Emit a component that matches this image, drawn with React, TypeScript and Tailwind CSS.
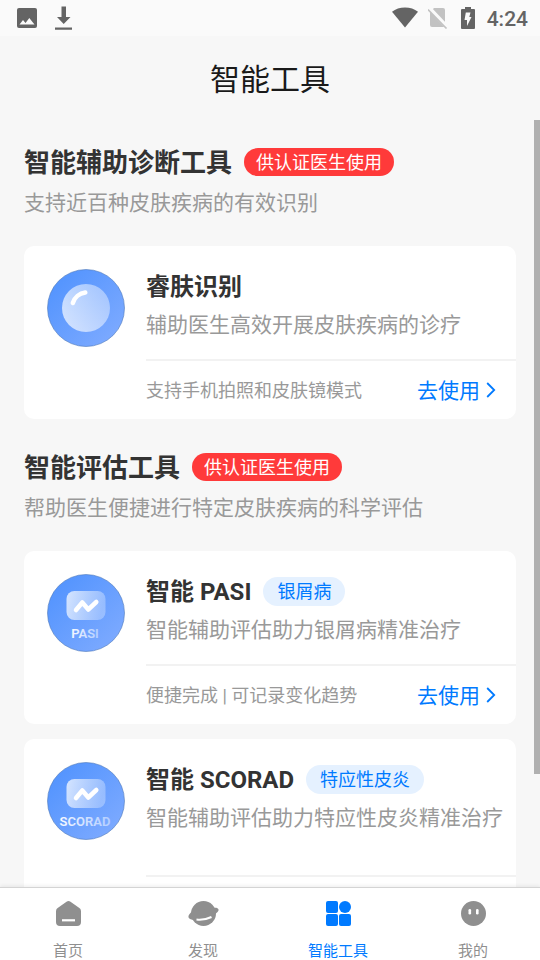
import type { ReactNode } from 'react';

function StatusBar() {
  return (
    <div className="flex h-9 shrink-0 items-center justify-between bg-[#fafafa] pr-3 pl-[17px] text-[#646464]">
      <div className="flex items-center gap-[18px]">
        <svg width="20" height="20" viewBox="0 0 20 20" aria-hidden="true">
          <rect width="20" height="20" rx="2" fill="currentColor" />
          <path d="M2.500 16.500 6 12l2.500 3 3.800-5 5.200 6.500z" fill="#fafafa" />
        </svg>
        <svg width="17" height="24" viewBox="0 0 17 24" fill="currentColor" aria-hidden="true">
          <path d="M6.500 .5h4.500v10.500h4.500L8.700 18 2 11h4.500zM0 21.500h17v2.300H0z" />
        </svg>
      </div>
      <div className="flex items-center">
        <svg width="26" height="22" viewBox="0 0 26 22" fill="currentColor" aria-hidden="true">
          <path d="M13 20.500 0 4.800C3.500 2 8 .5 13 .5s9.500 1.500 13 4.300z" />
        </svg>
        <svg className="ml-2.5" width="20" height="22" viewBox="0 0 20 22" aria-hidden="true">
          <path d="M6 1h9a2 2 0 0 1 2 2v15a2 2 0 0 1-2 2H4a2 2 0 0 1-2-2V5z" fill="#c2c2c2" />
          <path d="M1.500 1.500 20 21" stroke="#fafafa" strokeWidth="4" />
          <path d="M0 2.500 18.500 21.500" stroke="#c2c2c2" strokeWidth="1.600" />
        </svg>
        <svg className="ml-[13px]" width="14" height="22" viewBox="0 0 14 22" aria-hidden="true">
          <path d="M4 0h6v2h3a1 1 0 0 1 1 1v18a1 1 0 0 1-1 1H1a1 1 0 0 1-1-1V3a1 1 0 0 1 1-1h3z" fill="currentColor" />
          <path d="M4.800 5.500h4.700L8.300 10h2.200L6 19v-6H3.500z" fill="#fafafa" />
        </svg>
        <span className="ml-3 pt-0.5 text-[21px] leading-8 font-medium">4:24</span>
      </div>
    </div>
  );
}

function LensIcon() {
  return (
    <svg width="78" height="78" viewBox="0 0 78 78" aria-hidden="true">
      <defs>
        <linearGradient id="lens-bg" x1="0" y1="0" x2="1" y2="1">
          <stop offset="0.15" stopColor="#5595fe" />
          <stop offset="0.9" stopColor="#7daaff" />
        </linearGradient>
        <linearGradient id="lens-glass" x1="0" y1="0.7" x2="1" y2="0.3">
          <stop offset="0" stopColor="#fff" stopOpacity="0.7" />
          <stop offset="1" stopColor="#fff" stopOpacity="0.4" />
        </linearGradient>
      </defs>
      <circle cx="39" cy="39" r="38.500" fill="url(#lens-bg)" stroke="#4f78b8" strokeWidth="0.600" />
      <circle cx="39" cy="39" r="24" fill="url(#lens-glass)" />
      <path d="M25.800 34a15 15 0 0 1 12.500-10.400" fill="none" stroke="#fff" strokeWidth="4.500" strokeLinecap="round" />
    </svg>
  );
}

function ScoreIcon({ id, name }: { id: string; name: string }) {
  return (
    <svg width="78" height="78" viewBox="0 0 78 78" aria-hidden="true">
      <defs>
        <linearGradient id={`${id}-bg`} x1="0" y1="0" x2="1" y2="1">
          <stop offset="0.15" stopColor="#5595fe" />
          <stop offset="0.9" stopColor="#7daaff" />
        </linearGradient>
        <linearGradient id={`${id}-panel`} x1="0" y1="0" x2="1" y2="0.2">
          <stop offset="0" stopColor="#fff" stopOpacity="0.75" />
          <stop offset="1" stopColor="#fff" stopOpacity="0.3" />
        </linearGradient>
        <linearGradient id={`${id}-name`} x1="0" y1="0" x2="1" y2="0">
          <stop offset="0" stopColor="#fff" stopOpacity="0.95" />
          <stop offset="1" stopColor="#fff" stopOpacity="0.45" />
        </linearGradient>
      </defs>
      <circle cx="39" cy="39" r="38.500" fill={`url(#${id}-bg)`} stroke="#4f78b8" strokeWidth="0.600" />
      <rect x="19.500" y="17" width="39" height="29" rx="8" fill={`url(#${id}-panel)`} />
      <path d="m29 36 6.300-7.500 6 7 8-7.500" fill="none" stroke="#fff" strokeWidth="4.500" strokeLinecap="round" strokeLinejoin="round" />
      <text x="38" y="63.500" textAnchor="middle" fontSize="13" fontWeight="600" fill={`url(#${id}-name)`}>
        {name}
      </text>
    </svg>
  );
}

function SectionHeading({ title, description }: { title: string; description: string }) {
  return (
    <header className="mb-7">
      <div className="flex h-9 items-center gap-3">
        <h2 className="pt-0.5 text-[26px] leading-8 font-bold text-[#333]">{title}</h2>
        <span className="rounded-full bg-[#ff3a3a] px-3 pt-0.5 text-lg leading-[26px] text-white">供认证医生使用</span>
      </div>
      <p className="mt-2 text-[21px] leading-[30px] text-[#999]">{description}</p>
    </header>
  );
}

type ToolCardProps = {
  icon: ReactNode;
  title: string;
  tag?: string;
  description: string;
  note?: string;
  tall?: boolean;
};

function ToolCard({ icon, title, tag, description, note, tall }: ToolCardProps) {
  return (
    <article className="flex rounded-[10px] bg-white pl-[23px]">
      <div className="mr-[21px] shrink-0 pt-[23px]">{icon}</div>
      <div className="min-w-0 flex-1">
        <div className={tall ? 'pt-5 pb-[38px]' : 'pt-5 pb-[15px]'}>
          <div className="flex h-10 items-center gap-3">
            <h3 className="pt-0.5 text-2xl leading-8 font-bold text-[#333]">{title}</h3>
            {tag && <span className="rounded-full bg-[#e5f1ff] px-3.5 text-lg leading-[29px] text-[#007aff]">{tag}</span>}
          </div>
          <p className="text-[21px] leading-[38px] whitespace-nowrap text-[#999]">{description}</p>
        </div>
        <div className="flex h-[60px] items-center justify-between border-t-2 border-[#f2f2f2] pr-5">
          {note && (
            <>
              <p className="pt-0.5 text-lg text-[#999]">{note}</p>
              <button type="button" className="flex items-center gap-1.5 text-[21px] leading-[30px] text-[#007aff]">
                <span className="pt-0.5">去使用</span>
                <svg width="10" height="16" viewBox="0 0 10 16" fill="none" stroke="currentColor" strokeWidth="1.800" aria-hidden="true">
                  <path d="m1.200 1 7 7-7 7" />
                </svg>
              </button>
            </>
          )}
        </div>
      </div>
    </article>
  );
}

function TabItem({ label, active, children }: { label: string; active?: boolean; children: ReactNode }) {
  return (
    <button
      type="button"
      aria-current={active ? 'page' : undefined}
      className={`flex flex-1 flex-col items-center pt-[13px] pl-px ${active ? 'text-[#007aff]' : 'text-[#8f8f8f]'}`}
    >
      {children}
      <span className="mt-[13px] text-[15px] leading-6">{label}</span>
    </button>
  );
}

function TabBar() {
  return (
    <nav className="relative flex h-[73px] shrink-0 items-start border-t border-[#d4d4d4] bg-white shadow-[0_-1px_4px_rgba(0,0,0,0.08)]">
      <TabItem label="首页">
        <svg width="25" height="25" viewBox="0 0 25 25" aria-hidden="true">
          <path d="M10.500.7a3.500 3.500 0 0 1 4 0l8.500 6A4 4 0 0 1 25 10v11a4 4 0 0 1-4 4H4a4 4 0 0 1-4-4V10a4 4 0 0 1 2-3.300z" fill="currentColor" />
          <path d="M6 19.300h13" stroke="#fff" strokeWidth="2.200" />
        </svg>
      </TabItem>
      <TabItem label="发现">
        <svg width="31" height="25" viewBox="0 0 31 25" aria-hidden="true">
          <circle cx="15.500" cy="12.500" r="12.500" fill="currentColor" />
          <path d="M4.500 10C1 13 0 15 .6 16.600c1 2.800 7 3 14.400 1.200 9-2.200 16.500-6.500 15.500-9.400C30 7 28 6.500 25.500 7z" fill="currentColor" />
          <path d="M8.500 18.500c5 .6 10.500-.4 15-2.500" fill="none" stroke="#fff" strokeWidth="2.100" />
        </svg>
      </TabItem>
      <TabItem label="智能工具" active>
        <svg width="25" height="25" viewBox="0 0 25 25" fill="currentColor" aria-hidden="true">
          <rect width="12" height="12" rx="2" />
          <circle cx="19" cy="6" r="6" />
          <rect y="13" width="12" height="12" rx="2" />
          <rect x="13" y="13" width="12" height="12" rx="2" />
        </svg>
      </TabItem>
      <TabItem label="我的">
        <svg width="25" height="25" viewBox="0 0 25 25" aria-hidden="true">
          <circle cx="12.500" cy="12.500" r="12.500" fill="currentColor" />
          <rect x="7.500" y="8" width="2.600" height="5.500" rx="1.300" fill="#fff" />
          <rect x="15" y="8" width="2.600" height="5.500" rx="1.300" fill="#fff" />
        </svg>
      </TabItem>
    </nav>
  );
}

export default function App() {
  return (
    <div className="flex h-screen flex-col bg-[#f7f7f7] font-[Roboto,'Noto_Sans_CJK_SC',sans-serif]">
      <StatusBar />
      <h1 className="h-[84px] shrink-0 text-center text-[30px] leading-[88px] text-[#1a1a1a]">智能工具</h1>
      <div className="relative min-h-0 flex-1">
        <main className="h-full overflow-hidden px-6 pt-6">
          <section>
            <SectionHeading title="智能辅助诊断工具" description="支持近百种皮肤疾病的有效识别" />
            <ToolCard
              icon={<LensIcon />}
              title="睿肤识别"
              description="辅助医生高效开展皮肤疾病的诊疗"
              note="支持手机拍照和皮肤镜模式"
            />
          </section>
          <section className="mt-[30px]">
            <SectionHeading title="智能评估工具" description="帮助医生便捷进行特定皮肤疾病的科学评估" />
            <div className="flex flex-col gap-[15px]">
              <ToolCard
                icon={<ScoreIcon id="pasi" name="PASI" />}
                title="智能 PASI"
                tag="银屑病"
                description="智能辅助评估助力银屑病精准治疗"
                note="便捷完成 | 可记录变化趋势"
              />
              <ToolCard
                icon={<ScoreIcon id="scorad" name="SCORAD" />}
                title="智能 SCORAD"
                tag="特应性皮炎"
                description="智能辅助评估助力特应性皮炎精准治疗"
                tall
              />
            </div>
          </section>
        </main>
        <div className="absolute top-0 right-0 h-[85.3%] w-1.5 bg-[#b0b0b0]" />
      </div>
      <TabBar />
    </div>
  );
}
